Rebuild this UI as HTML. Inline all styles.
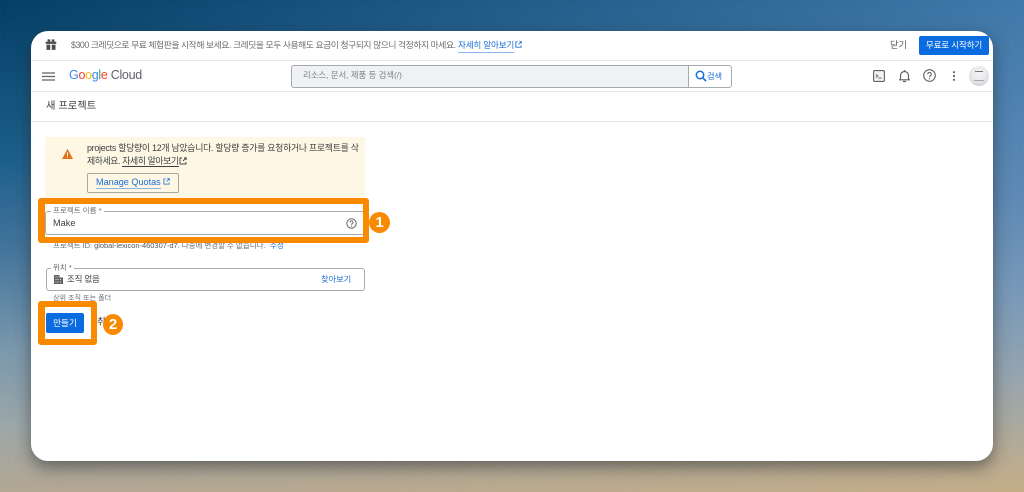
<!DOCTYPE html>
<html lang="ko"><head><meta charset="utf-8">
<style>
html,body{margin:0;padding:0}
body{width:1024px;height:492px;position:relative;overflow:hidden;font-family:"Liberation Sans","Noto Sans CJK KR",sans-serif;background:#1d5f8c}
#bgl,#bgr{position:absolute;left:0;top:0;width:1024px;height:492px}
#bgl{background:linear-gradient(180deg,#043f66 0,#1d5f8c 160px,#44759c 250px,#7a98ad 350px,#9ea8a8 430px,#b3a794 492px)}
#bgr{background:linear-gradient(180deg,#3f79ab 0,#5f8ab5 200px,#7a9ab8 300px,#97a5ae 380px,#b5ab95 450px,#c4ad88 492px);-webkit-mask-image:linear-gradient(90deg,transparent 0,#000 100%);mask-image:linear-gradient(90deg,transparent 0,#000 100%)}
#card{position:absolute;left:31px;top:31px;width:962px;height:430px;background:#fff;border-radius:17px;box-shadow:0 6px 16px rgba(40,40,40,.55);overflow:hidden}
#c{position:absolute;left:0;top:0;width:1024px;height:492px;filter:blur(.35px)}
.a{position:absolute;white-space:nowrap}
.line{position:absolute;left:31px;width:962px;height:1px;background:#e6e7e8}
svg{position:absolute;display:block}
</style></head><body>
<div id="bgl"></div><div id="bgr"></div>
<div id="card"></div>
<div id="c">
<div class="line" style="top:60px"></div>
<div class="line" style="top:91px"></div>
<div class="line" style="top:121px"></div>

<!-- banner -->
<svg style="left:45px;top:39px" width="12" height="12" viewBox="0 0 16 15"><path d="M1 3h14v3H1zM2 7h5v7H2zM9 7h5v7H9z" fill="#4a4d50"/><path d="M3.500 0h3.500v3H3.500zM9 0h3.500v3H9z" fill="#4a4d50"/></svg>
<div class="a" style="left:71px;top:39px;font-size:8.800px;letter-spacing:-.44px;line-height:13px;color:#6a6e72">$300 크레딧으로 무료 체험판을 시작해 보세요. 크레딧을 모두 사용해도 요금이 청구되지 않으니 걱정하지 마세요.</div>
<div class="a" style="left:458px;top:39px;font-size:8.600px;letter-spacing:-.2px;line-height:13px;color:#1a6dd6;border-bottom:1px solid #8ab6ea">자세히 알아보기</div>
<svg style="left:515px;top:41px" width="7" height="7" viewBox="0 0 8 8"><path d="M3 1H1v6h6V5M4 4l3-3M5 .800h2.200V3" fill="none" stroke="#1a6dd6"/></svg>
<div class="a" style="left:890px;top:39px;font-size:9.200px;line-height:13px;color:#54575a">닫기</div>
<div class="a" style="left:919px;top:36px;width:70px;height:19px;border-radius:2px;background:#0b6be0;color:#fff;font-size:8.500px;letter-spacing:-.1px;line-height:19px;text-align:center">무료로 시작하기</div>

<!-- header -->
<svg style="left:42px;top:72px" width="13" height="9" viewBox="0 0 13 9"><path d="M0 1h13M0 4.500h13M0 8h13" stroke="#5f6368" stroke-width="1.200"/></svg>
<div class="a" style="left:69px;top:67px;font-size:12.500px;line-height:17px;letter-spacing:-.3px"><span style="color:#4285f4">G</span><span style="color:#ea4335">o</span><span style="color:#fbbc05">o</span><span style="color:#4285f4">g</span><span style="color:#34a853">l</span><span style="color:#ea4335">e</span><span style="color:#5f6368"> Cloud</span></div>
<div class="a" style="left:291px;top:65px;width:397px;height:21px;background:#f0f1f3;border:1px solid #a6a9ad;border-right:0;border-radius:3px 0 0 3px"></div>
<div class="a" style="left:303px;top:69px;font-size:8.400px;line-height:13px;color:#7d8185">리소스, 문서, 제품 등 검색(/)</div>
<div class="a" style="left:688px;top:65px;width:42px;height:21px;background:#fff;border:1px solid #a6a9ad;border-radius:0 3px 3px 0"></div>
<svg style="left:695px;top:70px" width="12" height="12" viewBox="0 0 12 12"><circle cx="5" cy="5" r="3.700" fill="none" stroke="#1a6dd6" stroke-width="1.500"/><path d="M7.700 7.700L11 11" stroke="#1a6dd6" stroke-width="1.700"/></svg>
<div class="a" style="left:707px;top:70px;font-size:8.200px;line-height:13px;color:#1a6dd6">검색</div>

<svg style="left:873px;top:70px" width="12" height="12" viewBox="0 0 12 12"><rect x=".600" y=".600" width="10.800" height="10.800" rx="1" fill="#f1f2f3" stroke="#5f6368" stroke-width="1.100"/><path d="M3 4.500l1.800 1.500L3 7.500M5.500 8h3" fill="none" stroke="#5f6368"/></svg>
<svg style="left:898px;top:69px" width="13" height="14" viewBox="0 0 13 14"><path d="M2.500 10.500V6.500a4 4 0 0 1 8 0v4M1 10.800h11M6.500 1v1.500M5 12.500h3" fill="none" stroke="#5f6368" stroke-width="1.200"/></svg>
<svg style="left:923px;top:69px" width="13" height="13" viewBox="0 0 13 13"><circle cx="6.500" cy="6.500" r="5.800" fill="none" stroke="#5f6368" stroke-width="1.100"/><path d="M4.700 5.200a1.800 1.800 0 1 1 2.800 1.500c-.7.400-1 .8-1 1.500" fill="none" stroke="#5f6368" stroke-width="1.100"/><circle cx="6.500" cy="9.800" r=".7" fill="#5f6368"/></svg>
<svg style="left:952px;top:71px" width="4" height="10" viewBox="0 0 4 10"><circle cx="2" cy="1.200" r="1.100" fill="#5f6368"/><circle cx="2" cy="5" r="1.100" fill="#5f6368"/><circle cx="2" cy="8.800" r="1.100" fill="#5f6368"/></svg>
<div class="a" style="left:969px;top:66px;width:20px;height:20px;border-radius:50%;background:radial-gradient(circle at 50% 35%,#f4f5f6 0%,#e3e5e8 55%,#bfc3c8 100%)"></div>
<div class="a" style="left:975px;top:71px;width:8px;height:1px;background:#777"></div>
<div class="a" style="left:974px;top:80px;width:10px;height:1px;background:#a5a8ac"></div>

<div class="a" style="left:46px;top:99px;font-size:10.300px;line-height:15px;color:#3c4043">새 프로젝트</div>

<!-- warning -->
<div class="a" style="left:45px;top:137px;width:320px;height:70px;background:#fef7e4"></div>
<svg style="left:62px;top:149px" width="11" height="10" viewBox="0 0 11 10"><path d="M5.500 0L11 10H0z" fill="#e3701c"/><path d="M5 3.500h1v3.200H5zM5 7.500h1v1H5z" fill="#fff"/></svg>
<div class="a" style="left:87px;top:142px;font-size:8.900px;letter-spacing:-.26px;line-height:13px;color:#3c4043">projects 할당량이 12개 남았습니다. 할당량 증가를 요청하거나 프로젝트를 삭</div>
<div class="a" style="left:87px;top:155px;font-size:8.900px;letter-spacing:-.4px;line-height:13px;color:#3c4043">제하세요. <span style="border-bottom:1px solid #3c4043">자세히 알아보기</span></div>
<svg style="left:179px;top:157px" width="8" height="8" viewBox="0 0 8 8"><path d="M3 1H1v6h6V5M4 4l3-3M5 .800h2.200V3" fill="none" stroke="#3c4043" stroke-width=".9"/></svg>
<div class="a" style="left:87px;top:173px;width:90px;height:18px;border:1px solid #a9a79e;border-radius:2px"></div>
<div class="a" style="left:96px;top:177px;font-size:9.100px;line-height:11px;color:#1a6dd6;border-bottom:1px solid #8ab6ea">Manage Quotas</div>
<svg style="left:163px;top:178px" width="7" height="7" viewBox="0 0 8 8"><path d="M3 1H1v6h6V5M4 4l3-3M5 .800h2.200V3" fill="none" stroke="#1a6dd6" stroke-width=".9"/></svg>

<!-- project id line, clipped by highlight -->
<div class="a" style="left:53px;top:240px;font-size:7.500px;letter-spacing:-.03px;line-height:11px;color:#6a6e72">프로젝트 ID: <span style="color:#55585c">global-lexicon-460307-d7</span>. 나중에 변경할 수 없습니다.</div>
<div class="a" style="left:270px;top:240px;font-size:7.500px;line-height:11px;color:#1a6dd6">수정</div>

<!-- orange highlight 1 -->
<div class="a" style="left:38px;top:198px;width:331px;height:45px;box-sizing:border-box;border:solid #f98a00;border-width:6px 6px 6px 7px;border-radius:3px;background:#fff"></div>
<div class="a" style="left:45px;top:211px;width:318px;height:24px;box-sizing:border-box;border:1px solid #a8abaf;border-right:0;border-radius:3px 0 0 3px"></div>
<div class="a" style="left:51px;top:205px;background:#fff;padding:0 2px;font-size:7.500px;line-height:11px;color:#6a6e72">프로젝트 이름 *</div>
<div class="a" style="left:53px;top:217px;font-size:9.200px;line-height:13px;color:#3c4043">Make</div>
<svg style="left:346px;top:218px" width="11" height="11" viewBox="0 0 11 11"><circle cx="5.500" cy="5.500" r="4.700" fill="none" stroke="#5f6368"/><path d="M4 4.400a1.500 1.500 0 1 1 2.300 1.200c-.6.300-.8.600-.8 1.200" fill="none" stroke="#5f6368" stroke-width=".9"/><circle cx="5.500" cy="8.200" r=".6" fill="#5f6368"/></svg>
<div class="a" style="left:369px;top:212px;width:21px;height:21px;border-radius:50%;background:#f98a00;color:#fff;font-weight:bold;font-size:15px;line-height:21px;text-align:center">1</div>

<!-- location -->
<div class="a" style="left:46px;top:268px;width:317px;height:21px;border:1px solid #a8abaf;border-radius:3px"></div>
<div class="a" style="left:51px;top:262px;background:#fff;padding:0 2px;font-size:7.500px;line-height:11px;color:#6a6e72">위치 *</div>
<svg style="left:54px;top:275px" width="9" height="9" viewBox="0 0 9 9"><path d="M0 0h5.500v2.500H9V9H0z" fill="#5f6368"/><path d="M1.500 1.500h1v1h-1zM3.500 1.500h1v1h-1zM1.500 4h1v1h-1zM3.500 4h1v1h-1zM6 4h1v1H6zM1.500 6.500h1v1h-1zM3.500 6.500h1v1h-1zM6 6.500h1v1H6z" fill="#e8e8e8"/></svg>
<div class="a" style="left:67px;top:273px;font-size:8.500px;letter-spacing:-.2px;line-height:13px;color:#3c4043">조직 없음</div>
<div class="a" style="left:321px;top:273px;font-size:8.200px;line-height:13px;color:#1a6dd6">찾아보기</div>
<div class="a" style="left:53px;top:293px;font-size:7.100px;line-height:11px;color:#6a6e72">상위 조직 또는 폴더</div>

<!-- orange highlight 2 -->
<div class="a" style="left:97px;top:316px;font-size:9.500px;line-height:13px;color:#3c4043">취소</div>
<div class="a" style="left:38px;top:301px;width:59px;height:44px;box-sizing:border-box;border:solid #f98a00;border-width:6px 6px 6px 7px;border-radius:3px;background:#fff"></div>
<div class="a" style="left:46px;top:313px;width:38px;height:20px;border-radius:2px;background:#0b6be0;color:#fff;font-size:8.600px;line-height:20px;text-align:center">만들기</div>
<div class="a" style="left:103px;top:314px;width:20px;height:21px;border-radius:50%;background:#f98a00;color:#fff;font-weight:bold;font-size:15px;line-height:21px;text-align:center">2</div>
</div>
</body></html>
